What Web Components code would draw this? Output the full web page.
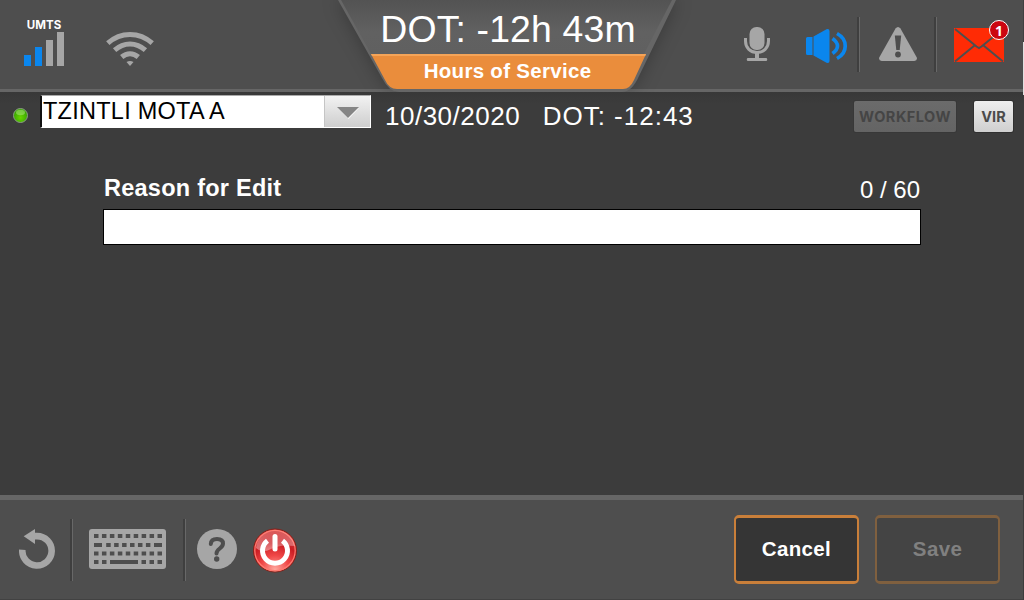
<!DOCTYPE html>
<html lang="en"><head><meta charset="utf-8"><title>Hours of Service</title>
<style>html,body{margin:0;width:1024px;height:600px;overflow:hidden;background:#3c3c3c;font-family:"Liberation Sans",Arial,sans-serif;color:#fff}</style></head>
<body><hos-app></hos-app>
<script>
const define = (name, html) => {
  const t = document.createElement('template');
  t.innerHTML = html;
  customElements.define(name, class extends HTMLElement {
    constructor() { super(); this.attachShadow({mode: 'open'}).append(t.content.cloneNode(true)); }
  });
};
define('bar-divider', `<style>:host{display:block;flex:none;box-sizing:border-box;width:3px;background:linear-gradient(90deg,#3f3f3f 0 2px,#686868 2px)}</style>`);
define('signal-meter', `<style>:host{display:block;width:42px;height:48px;text-align:center;font:700 11.5px/13px Inter,sans-serif;letter-spacing:.05px}svg{display:block}span{display:block;height:12px;white-space:nowrap}</style>
<span><slot></slot></span><svg width="42" height="36"><g fill="#0a86ee"><path d="M1 24h7v11H1zM12 16h7v19h-7z"/></g><g fill="#a6a6a6"><path d="M23 9h7v26h-7zM34 1h7v34h-7z"/></g></svg>`);
define('wifi-icon', `<style>:host,svg{display:block}</style><svg width="50" height="36" fill="none" stroke="#a6a6a6" stroke-width="5"><path d="M2.8 12.2Q12.5 3.5 25 3.5T47.200 12.2"/><path d="M9.600 19.200Q16.500 13 25 13T40.400 19.200"/><path d="M16.700 26Q20.500 22.700 25 22.700T33.300 26"/><path d="M21.500 31q3.500-2 7 0L25 35z" fill="#a6a6a6" stroke="none"/></svg>`);
define('mic-icon', `<style>:host,svg{display:block}</style><svg width="28" height="36"><rect x="6.500" y="1" width="15" height="23" rx="7" fill="#a6a6a6"/><path d="M2.500 12v3c0 7 5 11.500 11.500 11.500S25.500 22 25.500 15v-3" fill="none" stroke="#a6a6a6" stroke-width="3"/><path d="M12 26h4v6h7.500q1.500 1.500 0 3h-19q-1.500-1.500 0-3H12z" fill="#a6a6a6"/></svg>`);
define('speaker-icon', `<style>:host,svg{display:block}</style><svg width="44" height="36"><path d="M1 10.500Q1 9 2.500 9H7.500v18H2.500Q1 27 1 25.500zM8.500 8.500 21.500 1.200Q24.500.500 24.500 3v30q0 2.500-3 1.800L8.500 27.500z" fill="#0a86ee"/><g fill="none" stroke="#0a86ee" stroke-width="3.700"><path d="M27.500 10.500q10 7.500 0 15"/><path d="M32 5.500c11 6 11 19 0 25"/></g></svg>`);
define('warning-icon', `<style>:host,svg{display:block}</style><svg width="40" height="36"><path d="M17.500 2.500q2.500-3 5 0L38.800 31.500q.7 3-2.500 3.500H3.700Q.5 34.500 1.200 31.500z" fill="#a6a6a6"/><path d="M16.800 9.500h6.400l-1.500 14.500h-3.400z" fill="#4e4e4e"/><circle cx="20" cy="28.500" r="2.900" fill="#4e4e4e"/></svg>`);
define('mail-icon', `<style>:host{display:block;position:relative;width:51px;height:35px}svg{display:block}span{position:absolute;box-sizing:border-box;left:35px;top:-8px;width:20px;height:20px;border:1px solid #fff;border-radius:50%;background:#cc0610;text-align:center;font:700 14px/20px "Open Sans",sans-serif}</style>
<svg width="51" height="35"><path d="M0 0h50v34H0z" fill="#ff2b05"/><path d="M1 1l21.500 17.500L25 20l2.500-1.500L49 1M1 33.500l19.500-16M49 33.500l-19.500-16" fill="none" stroke="#4e4e4e" stroke-width="2"/></svg><span><slot></slot></span>`);
define('status-tab', `<style>:host{display:grid;height:92px;grid-template-rows:55px 37px}svg{grid-area:1/1/3/2;overflow:visible}.tab{filter:drop-shadow(0 0 9px rgba(0,0,0,.28))}
b{grid-area:1/1;font-size:37.4px;font-weight:400;line-height:58px;letter-spacing:.15px;padding-left:2px;text-align:center;white-space:nowrap;z-index:1}i{grid-area:2/1;font:700 20.500px/32px "Liberation Sans";letter-spacing:.3px;padding-left:1px;text-align:center;white-space:nowrap;z-index:1}</style>
<svg width="338" height="92"><defs><linearGradient id="g" x1="0" y1="0" x2="0" y2="1"><stop stop-color="#535353"/><stop offset=".6" stop-color="#616161"/><stop offset="1" stop-color="#606060"/></linearGradient></defs>
<path class="tab" d="M0 0H338L301 76Q294 92 284 92H61Q51 92 44 78z" fill="#666"/><path d="M3 0H334L306 54H33z" fill="url(#g)"/><path d="M33 54H308L296 80Q292 89 285 89H59Q51 89 47 80z" fill="#ea8d3c"/><path d="M33 54H308L307.200 56H34z" fill="#f5a458"/></svg><b><slot name="time"></slot></b><i><slot></slot></i>`);
define('top-bar', `<style>:host{display:grid;box-sizing:border-box;height:92px;overflow:hidden;grid-template-columns:338px 338px 1fr;background:linear-gradient(#666,#666) 0 89px/100% 3px no-repeat,#4e4e4e}
.l,.r{display:flex;align-items:flex-start}.l{padding:19px 0 0 23px;gap:40px}.l wifi-icon{margin-top:12px}
.r{padding:0 18px 0 67px}mic-icon{margin:26px 0 0}speaker-icon{margin:28px 0 0 34px}bar-divider{height:55px;margin:17px 0 0 8px}warning-icon{margin:26px 0 0 18px}bar-divider.b{margin-left:16px}mail-icon{margin:28px 0 0 17px}</style>
<div class="l"><signal-meter>UMTS</signal-meter><wifi-icon></wifi-icon></div><status-tab><slot name="time" slot="time"></slot><slot></slot></status-tab>
<div class="r"><mic-icon></mic-icon><speaker-icon></speaker-icon><bar-divider></bar-divider><warning-icon></warning-icon><bar-divider class="b"></bar-divider><mail-icon>1</mail-icon></div>`);
define('driver-select', `<style>:host{display:flex;box-sizing:border-box;width:331px;height:33px;background:#fff;color:#000;border:1px solid #fff;border-left:2px solid #111;border-top-color:#aaa;font-size:23.5px;line-height:30px;justify-content:space-between}
span{padding-left:1px;white-space:pre;letter-spacing:.25px}div{width:45px;background:linear-gradient(#f2f2f2,#cecece);border-left:1px solid #c5c5c5}svg{display:block}</style><span><slot></slot></span><div><svg width="45" height="31"><path d="M13 12h21L23.500 23z" fill="#f8f8f8"/><path d="M12 11h22L23 22z" fill="#858585"/></svg></div>`);
define('tag-button', `<style>:host{display:block;flex:none;box-sizing:border-box;height:31px;border-radius:2px;background:linear-gradient(#eee,#cfcfcf);color:#4b4b4b;text-align:center;font:700 14.5px/31px Inter,sans-serif;letter-spacing:.1px;box-shadow:0 0 0 1px #303030}:host([disabled]){background:linear-gradient(#6b6b6b,#646464);color:#454545;letter-spacing:.5px;box-shadow:0 0 0 1px #383838}</style><slot></slot>`);
define('driver-bar', `<style>:host{display:flex;height:46px;box-sizing:border-box;padding:3px 11px 0 13px;background:linear-gradient(#383838,#3c3c3c 12px)}.led{margin:13px 12px 0 0;width:15px;height:15px}driver-select{margin-right:14px}
.d,.t{font-size:26px;line-height:43px;white-space:nowrap;letter-spacing:.5px}.t{margin-left:22.500px;letter-spacing:1px}tag-button{margin-top:6px}.w{width:102px;margin-left:auto;margin-right:18px}.v{width:39px}</style>
<svg class="led" viewBox="0 0 15 15"><defs><radialGradient id="l" cx=".5" cy=".65"><stop stop-color="#6ad600"/><stop offset="1" stop-color="#3aa800"/></radialGradient></defs><circle cx="7.500" cy="7.500" r="7" fill="url(#l)" stroke="#8c9a86"/><ellipse cx="7.500" cy="4.500" rx="4.500" ry="2.700" fill="#b5ec86" opacity=".5"/></svg>
<driver-select><slot name="driver"></slot></driver-select><span class="d">10/30/2020</span><span class="t">DOT: -12:43</span><tag-button class="w" disabled>WORKFLOW</tag-button><tag-button class="v">VIR</tag-button>`);
define('reason-field', `<style>:host{display:block;width:818px;margin:36px 0 0 103px}header{display:flex;justify-content:space-between;height:35px;padding:0 1px}b{font-size:23.500px;line-height:28px;letter-spacing:.25px}span{font-size:24px;line-height:31px}div{box-sizing:border-box;height:36px;background:#fff;border:1px solid #000}</style><header><b><slot></slot></b><span>0 / 60</span></header><div></div>`);
define('action-button', `<style>:host{display:block;box-sizing:border-box;width:125px;height:69px;border:2px solid #c97f3a;border-top-width:3px;border-bottom-width:3px;border-radius:5px;background:#353535;text-align:center;font:700 20.500px/62px "Liberation Sans";letter-spacing:.35px}:host([disabled]){background:#444;border-color:#80603f;color:#808080}</style><slot></slot>`);
define('undo-icon', `<style>:host,svg{display:block}</style><svg width="36" height="41"><path d="M3.300 20.700A14.700 14.700 0 1 0 18 7.100H15" fill="none" stroke="#a6a6a6" stroke-width="6.600"/><path d="M4.700 7.300 16 0v15z" fill="#a6a6a6"/></svg>`);
define('keyboard-icon', `<style>:host,svg{display:block}</style><svg width="77" height="40"><rect width="77" height="40" rx="3" fill="#a6a6a6"/><g fill="none" stroke="#4e4e4e" stroke-width="4"><path d="M5 7h68" stroke-dasharray="4.500 3.440"/><path d="M5 16h8M65 16h8"/><path d="M17.200 16H61.500" stroke-dasharray="4.500 3.440"/><path d="M5 24.500h68" stroke-dasharray="4.500 3.440"/><path d="M5 33h4.500m3.500 0h4.500M21 33h28m3.500 0h4.500m3.500 0h4.500m3.500 0h4.500"/></g></svg>`);
define('help-icon', `<style>:host,svg{display:block}</style><svg width="40" height="40"><circle cx="20" cy="20" r="20" fill="#a6a6a6"/><path d="M13.800 15Q14 10 20 10T26 14.500c0 5-6.500 5-6.500 10" fill="none" stroke="#4e4e4e" stroke-width="4" stroke-linecap="round"/><circle cx="19.700" cy="30" r="2.700" fill="#4e4e4e"/></svg>`);
define('power-icon', `<style>:host,svg{display:block}</style><svg width="44" height="45"><defs><radialGradient id="p" cx=".5" cy=".95" r=".95"><stop stop-color="#ffaaa0"/><stop offset=".35" stop-color="#f04848"/><stop offset=".65" stop-color="#cb1c22"/><stop offset="1" stop-color="#d94a4a"/></radialGradient><linearGradient id="h" x1="0" y1="0" x2="0" y2="1"><stop stop-color="#fff" stop-opacity=".1"/><stop offset="1" stop-color="#fff" stop-opacity=".4"/></linearGradient></defs><circle cx="22" cy="22.500" r="21.500" fill="url(#p)" stroke="#852018"/><circle cx="22" cy="22.500" r="20.200" fill="none" stroke="#ff7a70" stroke-width="1.200"/><path d="M3 20A19.500 19.500 0 0 1 41.500 18Q27 16 18 21T3 20z" fill="url(#h)"/><path d="M14.500 12.700A12.500 12.500 0 1 0 29.500 12.700" fill="none" stroke="#fff" stroke-width="5"/><path d="M22 8.500v12.500" stroke="#fff" stroke-width="5" stroke-linecap="round"/></svg>`);
define('bottom-bar', `<style>:host{display:flex;box-sizing:border-box;height:105px;padding:0 24px 0 19px;align-items:flex-start;border-top:5px solid #666;border-bottom:1px solid #424242;background:#4e4e4e}
undo-icon{margin-top:29px}bar-divider{height:62px;margin:19px 0 0 15px}keyboard-icon{margin:29px 0 0 16px}bar-divider.b{margin-left:17px}help-icon{margin:29px 0 0 11px}power-icon{margin:28px 0 0 16px}nav{display:flex;gap:16px;margin:15px 0 0 auto}</style>
<undo-icon></undo-icon><bar-divider></bar-divider><keyboard-icon></keyboard-icon><bar-divider class="b"></bar-divider><help-icon></help-icon><power-icon></power-icon><nav><slot></slot></nav>`);
define('hos-app', `<style>:host{display:grid;width:1024px;height:600px;grid-template-rows:92px 46px 1fr 105px;position:relative;background:#3c3c3c}aside{position:absolute;right:0;top:0;width:1px;height:600px;background:linear-gradient(#404040 42px,#e0e0e0 42px 95px,#3c3c3c 95px)}</style>
<top-bar><span slot="time">DOT: -12h 43m</span>Hours of Service</top-bar><driver-bar><span slot="driver">TZINTLI MOTA A</span></driver-bar><main><reason-field>Reason for Edit</reason-field></main>
<bottom-bar><action-button>Cancel</action-button><action-button disabled>Save</action-button></bottom-bar><aside></aside>`);
</script></body></html>
